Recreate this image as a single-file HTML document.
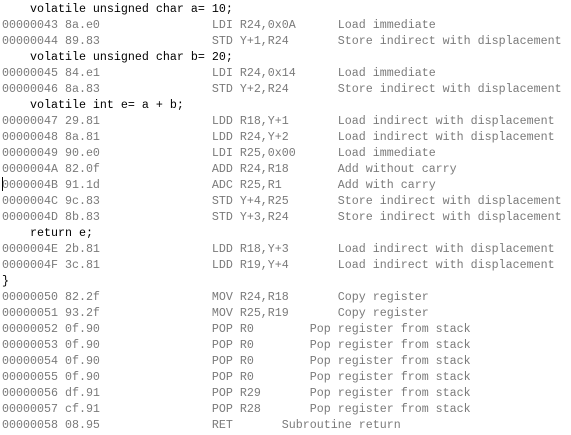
<!DOCTYPE html>
<html><head><meta charset="utf-8"><style>
html,body{margin:0;padding:0;background:#fff;width:571px;height:435px;overflow:hidden}
pre{margin:0;position:absolute;left:2px;top:1px;font-family:"Liberation Mono",monospace;font-size:11.67px;line-height:16px;color:#7a7a7a}
.s{color:#000}
#cur{position:absolute;left:2px;top:177px;width:1px;height:14px;background:#000}
</style></head><body>
<pre><span class="s">    volatile unsigned char a= 10;</span>
00000043 8a.e0                LDI R24,0x0A      Load immediate
00000044 89.83                STD Y+1,R24       Store indirect with displacement
<span class="s">    volatile unsigned char b= 20;</span>
00000045 84.e1                LDI R24,0x14      Load immediate
00000046 8a.83                STD Y+2,R24       Store indirect with displacement
<span class="s">    volatile int e= a + b;</span>
00000047 29.81                LDD R18,Y+1       Load indirect with displacement
00000048 8a.81                LDD R24,Y+2       Load indirect with displacement
00000049 90.e0                LDI R25,0x00      Load immediate
0000004A 82.0f                ADD R24,R18       Add without carry
0000004B 91.1d                ADC R25,R1        Add with carry
0000004C 9c.83                STD Y+4,R25       Store indirect with displacement
0000004D 8b.83                STD Y+3,R24       Store indirect with displacement
<span class="s">    return e;</span>
0000004E 2b.81                LDD R18,Y+3       Load indirect with displacement
0000004F 3c.81                LDD R19,Y+4       Load indirect with displacement
<span class="s">}</span>
00000050 82.2f                MOV R24,R18       Copy register
00000051 93.2f                MOV R25,R19       Copy register
00000052 0f.90                POP R0        Pop register from stack
00000053 0f.90                POP R0        Pop register from stack
00000054 0f.90                POP R0        Pop register from stack
00000055 0f.90                POP R0        Pop register from stack
00000056 df.91                POP R29       Pop register from stack
00000057 cf.91                POP R28       Pop register from stack
00000058 08.95                RET       Subroutine return</pre>
<div id="cur"></div>
</body></html>
